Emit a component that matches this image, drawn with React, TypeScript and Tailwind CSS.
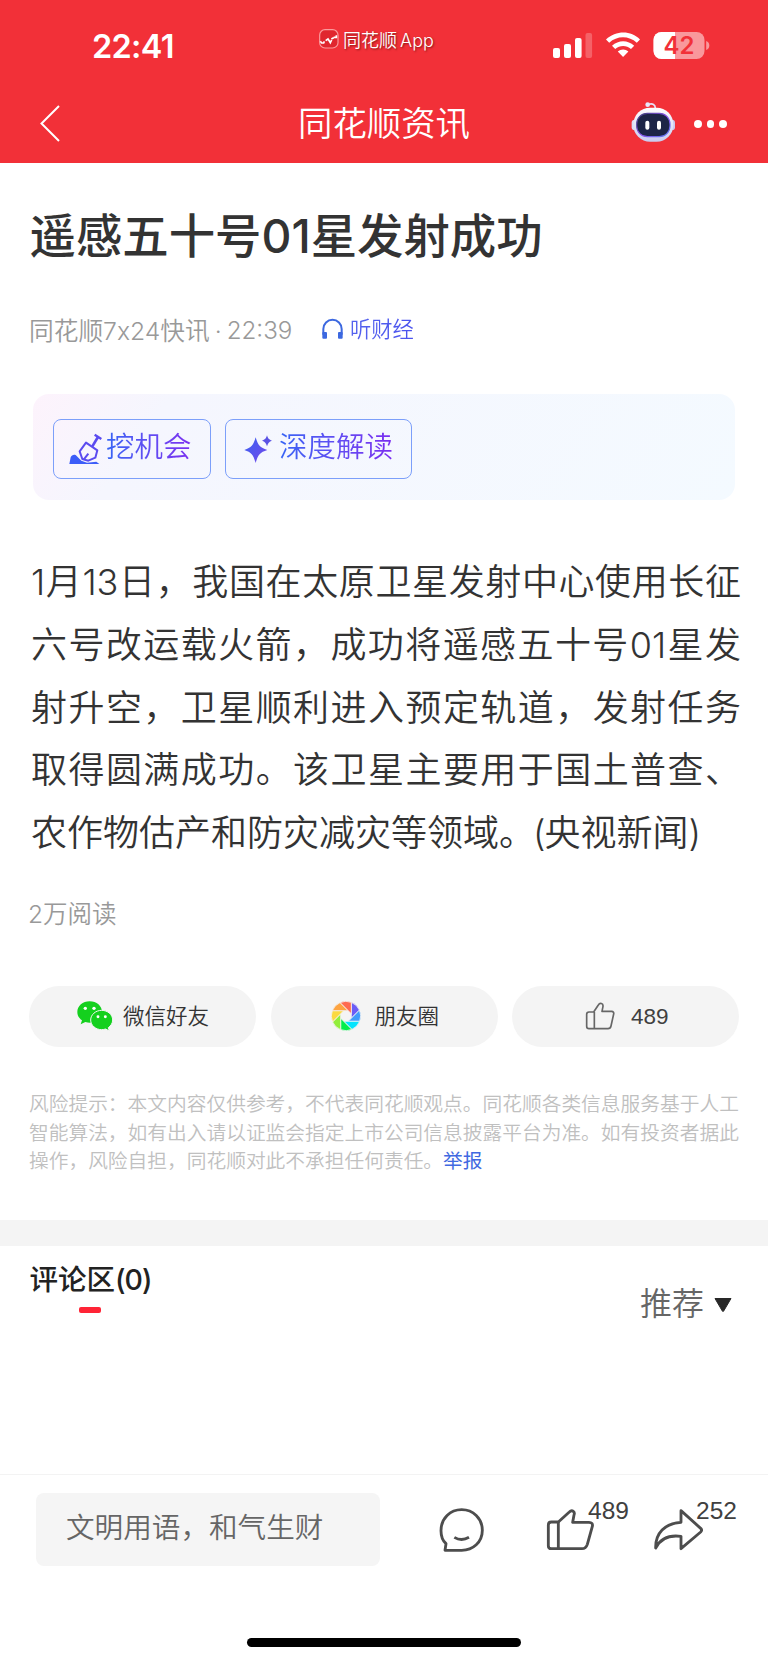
import React from "react";

const BLADES = ["#6b5cf6", "#3f9cfb", "#03e4fd", "#04ee4c", "#93ee3b", "#fbd93f", "#fda441", "#fe6a50"];

function rotate(x: number, y: number, deg: number) {
  const a = (deg * Math.PI) / 180;
  const px = x * Math.cos(a) - y * Math.sin(a);
  const py = x * Math.sin(a) + y * Math.cos(a);
  return `${px.toFixed(2)} ${py.toFixed(2)}`;
}

function MomentsIcon() {
  return (
    <svg className="h-[30px] w-[30px]" viewBox="-45 -45 90 90">
      {BLADES.map((color, i) => {
        const start = rotate(16, -41, i * 45);
        const end = rotate(16, -41, (i + 1) * 45);
        const inner = rotate(16, 6.6, i * 45);
        return (
          <path
            key={color}
            d={`M${start} A44 44 0 0 1 ${end} L${inner} Z`}
            fill={color}
            stroke="#f4f4f4"
            strokeWidth="2.4"
          />
        );
      })}
    </svg>
  );
}

function WechatIcon() {
  return (
    <svg className="h-[30px] w-[36px]" viewBox="0 0 108 90">
      <path
        fill="#14d01e"
        d="M38 1C17 1 1 15 1 33c0 10 5 19 14 25l-4 12 14-7c5 1 9 2 13 2 21 0 37-14 37-32S59 1 38 1z"
      />
      <path
        fill="#14d01e"
        stroke="#f4f4f4"
        strokeWidth="3"
        d="M74 28c-18 0-33 13-33 29s15 29 33 29c4 0 8-1 12-2l11 6-3-10c8-6 13-14 13-23 0-16-15-29-33-29z"
      />
      <circle cx="25" cy="22" r="5" fill="#fff" />
      <circle cx="51" cy="22" r="5" fill="#fff" />
      <circle cx="63" cy="47" r="4.4" fill="#fff" />
      <circle cx="85" cy="47" r="4.4" fill="#fff" />
    </svg>
  );
}

function SmallThumb() {
  return (
    <svg className="h-[29px] w-[30px]" viewBox="0 0 90 87" fill="none" stroke="#666" strokeWidth="5" strokeLinejoin="round">
      <path d="M12 30h14l14-21c5-8 15-5 14 4l-3 15h29c5 0 7 4 6 8l-8 36c-1 5-4 8-9 8H12c-4 0-7-3-7-7V37c0-4 3-7 7-7z" />
      <path d="M28 30v50" />
    </svg>
  );
}

function BackIcon() {
  return (
    <svg className="h-[38px] w-[22px]" viewBox="0 0 22 38" fill="none" stroke="#fff" strokeWidth="2">
      <path d="M20 2 2.5 19.5 20 37" />
    </svg>
  );
}

function StatusIcons() {
  return (
    <svg className="h-[32px] w-[160px]" viewBox="0 0 160 32">
      <g fill="#fff">
        <rect x="1" y="18" width="7" height="10" rx="2" />
        <rect x="12" y="14" width="7" height="14" rx="2" />
        <rect x="23" y="8" width="6.6" height="20" rx="2" />
        <rect x="33.5" y="3" width="6.6" height="25" rx="2" opacity="0.24" />
        <path d="M54 9.500C64 .3 79 .3 88 9.500l-3.200 3.200C77 5.300 65 5.300 57.200 12.700z" />
        <path d="M60 15.700c6.500-6 15.800-6 22.200 0L79 18.900c-4.500-4-11.300-4-15.800 0z" />
        <path d="M65.800 21.600c3-2.800 7.600-2.800 10.600 0L71.100 27z" />
      </g>
      <clipPath id="charge">
        <rect x="101" y="2" width="22" height="27" />
      </clipPath>
      <rect x="101.500" y="2" width="51" height="27" rx="8" fill="#fff" opacity="0.5" />
      <rect x="101.500" y="2" width="51" height="27" rx="8" fill="#fff" clipPath="url(#charge)" />
      <path d="M154.200 11c4.200 1.200 4.200 7.800 0 9z" fill="#fff" opacity="0.5" />
      <text x="127" y="24" textAnchor="middle" className="font-['Inter'] text-[24px] font-semibold" fill="#f23038">
        42
      </text>
    </svg>
  );
}

function RobotIcon() {
  return (
    <svg className="h-[42px] w-[46px]" viewBox="0 0 138 126">
      <defs>
        <linearGradient id="shell" x1="0" y1="0" x2="0" y2="1">
          <stop offset="0" stopColor="#fff" />
          <stop offset="1" stopColor="#c9cbef" />
        </linearGradient>
        <linearGradient id="rim" x1="0" y1="0" x2="1" y2="1">
          <stop offset="0" stopColor="#3a3f75" />
          <stop offset="0.5" stopColor="#8a50e8" />
          <stop offset="1" stopColor="#5a7af0" />
        </linearGradient>
      </defs>
      <path d="M53 10c12-4 20 1 20 12" fill="none" stroke="#e6e3f8" strokeWidth="5" />
      <circle cx="50" cy="11" r="7" fill="#e8e8fb" />
      <rect x="2" y="56" width="20" height="32" rx="9" fill="#dcdcf5" />
      <rect x="112" y="56" width="20" height="32" rx="9" fill="#c9c9ee" />
      <rect x="7" y="20" width="120" height="102" rx="50" fill="url(#shell)" />
      <rect x="17" y="37" width="100" height="70" rx="32" fill="#1d2547" stroke="url(#rim)" strokeWidth="3.500" />
      <rect x="43" y="59" width="12" height="27" rx="6" fill="#fff" />
      <rect x="78" y="59" width="12" height="27" rx="6" fill="#fff" />
    </svg>
  );
}

function AppBadge() {
  return (
    <svg className="h-[20px] w-[20px]" viewBox="0 0 60 60" fill="none">
      <rect x="2" y="2" width="55" height="55" rx="16" fill="#e0262e" stroke="#fb9a9c" strokeWidth="3.500" />
      <path d="M4 37l4 5h6l2-5M20 35l7-5 4 6 3 5 4-8M37 30l7-4M44 25h8v-6" stroke="#fff" strokeWidth="5" />
    </svg>
  );
}

function HeadphonesIcon() {
  return (
    <svg className="h-[22px] w-[23px]" viewBox="0 0 69 66">
      <path d="M7 50V33a27 27 0 0 1 55 0v17" fill="none" stroke="#3c68e0" strokeWidth="6" />
      <rect x="4" y="42" width="14" height="20" rx="3" fill="#3c68e0" />
      <rect x="51" y="42" width="14" height="20" rx="3" fill="#3c68e0" />
    </svg>
  );
}

function ShovelIcon() {
  return (
    <svg className="h-[32px] w-[33px]" viewBox="0 0 99 96">
      <g fill="none" stroke="#5b4bf0" strokeWidth="6" strokeLinejoin="round">
        <path d="M77 5 97 18" strokeWidth="7" />
        <path d="M87 12 70 40" strokeWidth="8" />
        <path d="M51 29 85 52 79 74 58 83 40 78 32 55z" />
        <path d="M58 62 44 80" />
      </g>
      <path d="M1 93 5 73c3-9 14-10 18-4l14 14 17 6 28-3 9 7z" fill="#3c5cf8" />
    </svg>
  );
}

function SparkIcon() {
  return (
    <svg className="h-[29px] w-[28px]" viewBox="0 0 84 87">
      <defs>
        <linearGradient id="spark" x1="0" y1="0" x2="1" y2="1">
          <stop offset="0" stopColor="#3a62f2" />
          <stop offset="1" stopColor="#7548ea" />
        </linearGradient>
      </defs>
      <path d="M35 7C42 31 48 38 70 45 48 52 42 59 35 84 28 59 22 52 1 45 22 38 28 31 35 7z" fill="url(#spark)" />
      <path d="M69 1c3 10 6 13 15 16-9 3-12 7-15 17-3-10-6-14-15-17 9-3 12-6 15-16z" fill="#5a52e4" />
    </svg>
  );
}

function ChatIcon() {
  return (
    <svg className="h-[46px] w-[46px]" viewBox="0 0 138 138" fill="none" stroke="#4d4d4d" strokeWidth="8.500" strokeLinejoin="round">
      <path d="M18 130l3-20C9 99 6 88 6 71 6 33 34 8 68 8s62 26 62 62-28 60-62 60z" />
      <path d="M46 91c13 8 30 8 44 0" />
    </svg>
  );
}

function LargeThumb() {
  return (
    <svg className="h-[44px] w-[48px]" viewBox="0 0 144 132" fill="none" stroke="#4d4d4d" strokeWidth="8.500" strokeLinejoin="round">
      <path d="M16 42h21L70 12c8-8 18-1 14 9l-4 22h49c8 0 12 5 10 12l-15 54c-3 9-8 13-16 13H16c-6 0-9-3-9-9V51c0-6 3-9 9-9z" />
      <path d="M37 42v80" />
    </svg>
  );
}

function ShareIcon() {
  return (
    <svg className="h-[44px] w-[50px]" viewBox="0 0 150 132" fill="none" stroke="#4d4d4d" strokeWidth="8.500" strokeLinejoin="round">
      <path d="M84 8l59 53c4 4 4 7 0 11l-59 50V85C46 80 22 92 8 120 7 76 35 46 84 43z" />
    </svg>
  );
}

const BODY_LINES = [
  "1月13日，我国在太原卫星发射中心使用长征",
  "六号改运载火箭，成功将遥感五十号01星发",
  "射升空，卫星顺利进入预定轨道，发射任务",
  "取得圆满成功。该卫星主要用于国土普查、",
];

const PILL = "flex h-[61px] w-[227px] items-center rounded-full bg-[#f4f4f4] text-[21.500px] text-[#333]";
const GRADIENT_TEXT =
  "bg-gradient-to-r from-[#3363f5] to-[#7a2cf0] bg-clip-text text-[28.500px] leading-[40px] text-transparent whitespace-nowrap";

export default function App() {
  return (
    <div className="flex h-[1662px] w-[768px] flex-col overflow-hidden bg-white font-['Inter','Noto_Sans_CJK_SC',sans-serif] font-[350] text-[#333]">
      <header className="h-[163px] shrink-0 bg-[#f23038] text-white">
        <div className="flex h-[82px]">
          <div className="mt-[27px] ml-[92px] w-[227px] text-[32.500px] leading-[40px] font-semibold tracking-[-0.7px]">22:41</div>
          <div className="mt-[29px] flex h-5 w-[233px] items-center gap-1">
            <AppBadge />
            <span className="mt-[3px] text-[18px] leading-5 whitespace-nowrap [text-shadow:1px_1px_2px_rgba(60,0,0,0.6)] [word-spacing:-2px]">同花顺 App</span>
          </div>
          <div className="mt-[30px]">
            <StatusIcons />
          </div>
        </div>
        <div className="flex h-[81px]">
          <div className="mt-[22px] ml-[39px] w-[259px]">
            <BackIcon />
          </div>
          <h2 className="mt-[18px] w-[333px] text-[34.400px] leading-[48px] font-[350]">同花顺资讯</h2>
          <div className="mt-[19px] w-[63px]">
            <RobotIcon />
          </div>
          <div className="mt-[38px] flex gap-[5px]">
            <i className="h-[7.500px] w-[7.500px] rounded-full bg-white" />
            <i className="h-[7.500px] w-[7.500px] rounded-full bg-white" />
            <i className="h-[7.500px] w-[7.500px] rounded-full bg-white" />
          </div>
        </div>
      </header>

      <main className="h-[1057px] shrink-0">
        <h1 className="mt-[41px] ml-[29.500px] text-[46.400px] leading-[64px] font-medium whitespace-nowrap">遥感五十号01星发射成功</h1>
        <div className="mt-[43px] ml-[29px] flex h-[40px]">
          <span className="flex w-[292px] text-[24.700px] leading-[40px] whitespace-nowrap text-[#999]">
            同花顺7x24快讯<span className="ml-[5px]">·</span>
            <span className="ml-[5px] text-[24.200px]">22:39</span>
          </span>
          <span className="mt-[7px]">
            <HeadphonesIcon />
          </span>
          <span className="ml-[6px] bg-gradient-to-r from-[#5563ee] to-[#4a52ee] bg-clip-text text-[21.300px] leading-[36px] text-transparent">
            听财经
          </span>
        </div>

        <div className="mt-[43px] ml-[33px] flex h-[106px] w-[702px] gap-[14px] rounded-[16px] bg-[linear-gradient(125deg,#fdf3fc_0%,#f5f6fe_18%,#f4faff_100%)] pt-[25px] pl-[20px]">
          <button className="flex h-[60px] w-[158px] items-center rounded-[8px] border border-[#7c9ffa] pl-[15px]">
            <ShovelIcon />
            <span className={`${GRADIENT_TEXT} -mt-[4px] ml-[4px]`}>挖机会</span>
          </button>
          <button className="flex h-[60px] w-[187px] items-center rounded-[8px] border border-[#7c9ffa] pl-[18px]">
            <SparkIcon />
            <span className={`${GRADIENT_TEXT} -mt-[4px] ml-[7px]`}>深度解读</span>
          </button>
        </div>

        <article className="mt-[51px] ml-[31px] w-[710px] text-[36px] leading-[62.800px] text-[#333]">
          {BODY_LINES.map((line) => (
            <p key={line} className="h-[62.800px] whitespace-nowrap [text-align-last:justify]">
              {line}
            </p>
          ))}
          <p className="h-[62.800px] whitespace-nowrap">
            农作物估产和防灾减灾等领域。<span className="-ml-[2px] tracking-[-1px]">(</span>央视新闻)
          </p>
        </article>

        <div className="mt-[29px] ml-[28px] text-[24.500px] leading-[40px] text-[#999]">2万阅读</div>

        <div className="mt-[52px] ml-[29px] flex gap-[14.500px]">
          <button className={`${PILL} pl-[48px]`}>
            <WechatIcon />
            <span className="ml-[10px] leading-8">微信好友</span>
          </button>
          <button className={`${PILL} pl-[60px]`}>
            <MomentsIcon />
            <span className="ml-[14px] leading-8">朋友圈</span>
          </button>
          <button className={`${PILL} pl-[73px]`}>
            <SmallThumb />
            <span className="mt-px ml-[16px] font-['Liberation_Sans',sans-serif] text-[22.500px] leading-8 text-[#404040]">489</span>
          </button>
        </div>

        <div className="mt-[43px] ml-[29px] text-[19.730px] leading-[28.700px] whitespace-nowrap text-[#c0c0c0]">
          <p>风险提示：本文内容仅供参考，不代表同花顺观点。同花顺各类信息服务基于人工</p>
          <p>智能算法，如有出入请以证监会指定上市公司信息披露平台为准。如有投资者据此</p>
          <p>
            操作，风险自担，同花顺对此不承担任何责任。<a className="font-normal text-[#4169e1]">举报</a>
          </p>
        </div>
      </main>

      <div className="h-[26px] shrink-0 bg-[#f4f4f4]" />

      <section className="flex h-[228px] shrink-0 justify-between">
        <div className="mt-[14px] ml-[29.500px] w-[122px]">
          <h3 className="text-[28.500px] leading-[40px] font-medium whitespace-nowrap text-[#222]">
            评论区<span className="tracking-[-1px]">(0)</span>
          </h3>
          <div className="mt-[7px] ml-[49px] h-[6px] w-[22px] rounded-[2px] bg-[#ff2436]" />
        </div>
        <div className="mt-[36px] mr-[36px] flex h-[44px] items-center gap-[10px]">
          <span className="text-[32px] leading-[44px] text-[#666]">推荐</span>
          <svg className="mt-[2px] h-[14px] w-[18px]" viewBox="0 0 18 14">
            <path d="M1 .5h16L9.500 13.300h-1z" fill="#282828" stroke="#282828" strokeLinejoin="round" />
          </svg>
        </div>
      </section>

      <footer className="h-[188px] shrink-0 border-t border-[#f3f3f3]">
        <div className="flex h-[163px] pt-[18px] pl-[36px]">
          <div className="h-[73px] w-[344px] rounded-[8px] bg-[#f5f5f5] pl-[30px] text-[28.600px] leading-[70px] text-[#666]">
            文明用语，和气生财
          </div>
          <div className="mt-[14px] ml-[59px] w-[107px]">
            <ChatIcon />
          </div>
          <div className="mt-[15px] flex w-[107px]">
            <LargeThumb />
            <span className="-mt-[13px] -ml-[6px] font-['Liberation_Sans',sans-serif] text-[24.500px] leading-8 text-[#404040]">489</span>
          </div>
          <div className="mt-[15px] flex">
            <ShareIcon />
            <span className="-mt-[13px] -ml-[7px] font-['Liberation_Sans',sans-serif] text-[24.500px] leading-8 text-[#404040]">252</span>
          </div>
        </div>
        <div className="mx-auto h-[9px] w-[274px] rounded-full bg-black" />
      </footer>
    </div>
  );
}
